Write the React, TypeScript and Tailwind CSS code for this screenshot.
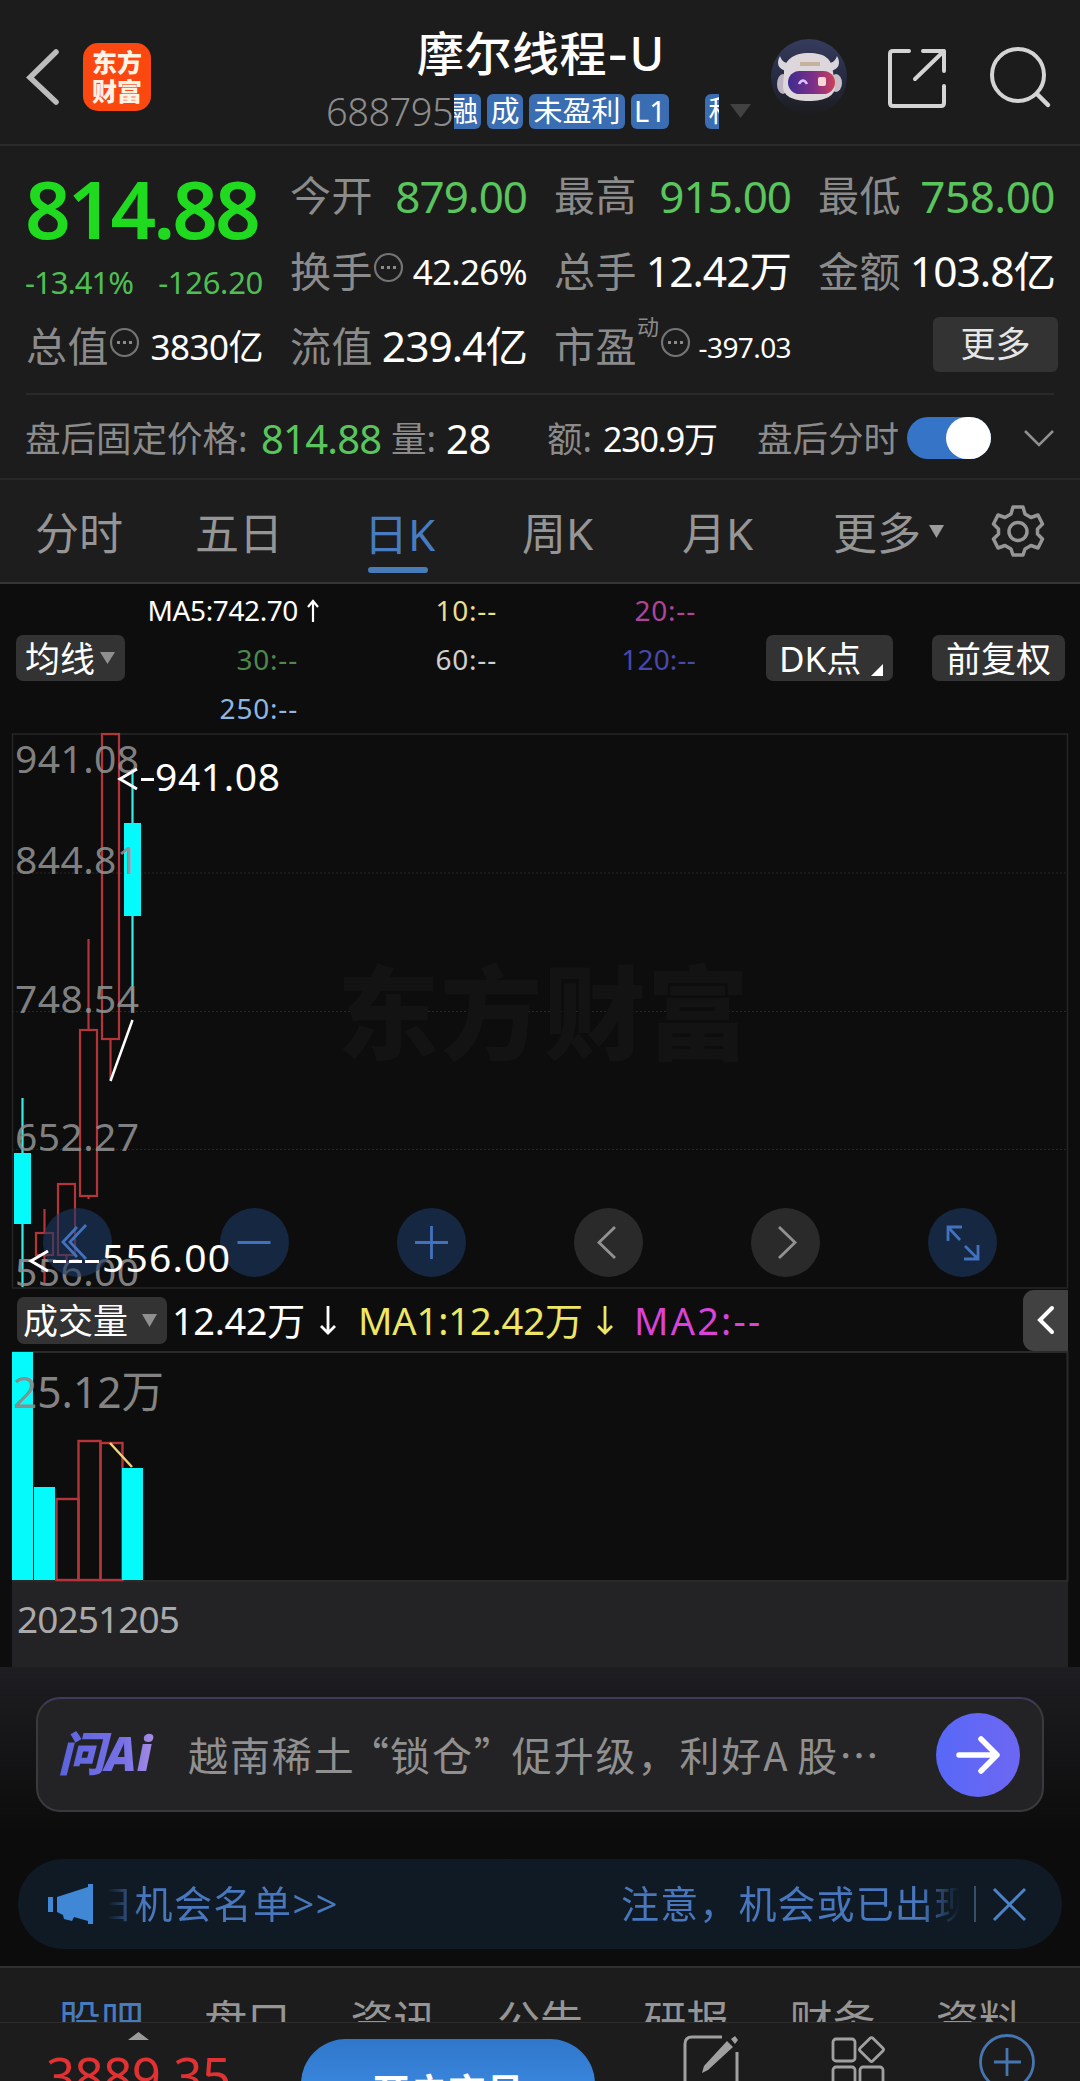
import type { ReactNode } from "react";
import { clsx } from "clsx";

const newsTabs = ["股吧", "盘口", "资讯", "公告", "研报", "财务", "资料"];

const axisLabels = [
  { text: "941.08", y: 40 },
  { text: "844.81", y: 141 },
  { text: "748.54", y: 280 },
  { text: "652.27", y: 418 },
  { text: "556.00", y: 553 },
];

// x é relativo à borda esquerda do gráfico (12px), y ao topo do painel
const candles = [
  { x: 2, w: 17, top: 420, bottom: 491, high: 365, low: 554, up: false },
  { x: 24, w: 17, top: 500, bottom: 522, high: 476, low: 550, up: true },
  { x: 46, w: 17, top: 451, bottom: 522, high: 451, low: 530, up: true },
  { x: 68, w: 17, top: 297, bottom: 463, high: 206, low: 466, up: true },
  { x: 90, w: 17, top: 1, bottom: 306, high: 1, low: 347, up: true },
  { x: 112, w: 17, top: 90, bottom: 183, high: 36, low: 278, up: false },
];

const volumes = [
  { x: 0, top: 0, up: false },
  { x: 22, top: 135, up: false },
  { x: 44, top: 147, up: true },
  { x: 66, top: 89, up: true },
  { x: 88, top: 91, up: true },
  { x: 110, top: 116, up: false },
];

export default function App() {
  return (
    <div className="flex h-[2081px] w-[1080px] flex-col overflow-hidden bg-[#0d0d0d] font-['Noto_Sans','Noto_Sans_CJK_SC',sans-serif] leading-none text-white">
      <Header />
      <Quote />
      <AfterHours />
      <PeriodTabs />
      <MovingAverages />
      <PriceChart />
      <VolumeChart />
      <AskAi />
      <Notice />
      <NewsTabs />
      <BottomBar />
    </div>
  );
}

/* HEADER */

function Header() {
  return (
    <header className="flex h-[146px] shrink-0 border-b-2 border-[#2b2b2b] bg-[#1c1c1c]">
      <svg className="ml-[24px] mt-[46px] h-[62px] w-[38px] shrink-0" viewBox="0 0 38 62" fill="none">
        <path d="M32 6 6 31.5 32 56" stroke="#bcbcbc" strokeWidth="5.5" strokeLinecap="round" />
      </svg>
      <div className="ml-[21px] mt-[43px] flex h-[68px] w-[68px] shrink-0 flex-col items-center justify-center gap-[3px] rounded-[15px] bg-[#fb4710] text-[25px] font-black text-[#fff3e6]">
        <span className="h-[26px]">东方</span>
        <span className="h-[26px]">财富</span>
      </div>

      <div className="ml-[175px] flex w-[433px] shrink-0 flex-col">
        <h1 className="ml-[91px] mt-[28px] flex whitespace-nowrap text-[47px] font-medium leading-[50px] tracking-[0.5px]">
          摩尔线程
          <span className="ml-[1px] origin-left scale-x-130">-</span>
          <span className="ml-[6px]">U</span>
        </h1>
        <div className="mt-[14px] flex h-[38px] items-center">
          <span className="w-[128px] shrink-0 text-[38px] font-light tracking-[-0.5px] text-[#8c8c8c]">
            688795
          </span>
          <div className="flex h-[35px] w-[265px] shrink-0 gap-[6px] overflow-hidden">
            <Tag className="-ml-[8px] w-[35px]">融</Tag>
            <Tag className="w-[36px]">成</Tag>
            <Tag className="w-[96px]">未盈利</Tag>
            <Tag className="w-[38px]">L1</Tag>
            <Tag className="ml-[30px] w-[36px]">科</Tag>
          </div>
          <svg className="ml-[11px] h-[14px] w-[21px]" viewBox="0 0 21 14">
            <path d="M0 0h21L10.500 14z" fill="#424242" />
          </svg>
        </div>
      </div>

      <RobotIcon />
      <svg className="ml-[36px] mt-[46px] h-[62px] w-[64px] shrink-0" viewBox="0 0 64 62" fill="none">
        <g stroke="#d4d4d4" strokeWidth="4" strokeLinecap="round" strokeLinejoin="round">
          <path d="M24 5H8q-3 0-3 3v49q0 3 3 3h48q3 0 3-3V40M38 5h21v20M59 5 30 33" />
        </g>
      </svg>
      <svg className="ml-[39px] mt-[44px] h-[66px] w-[64px] shrink-0" viewBox="0 0 64 66" fill="none">
        <circle cx="30" cy="31" r="26" stroke="#d4d4d4" strokeWidth="4" />
        <path d="m49 50 11 11" stroke="#d4d4d4" strokeWidth="4.500" strokeLinecap="round" />
      </svg>
    </header>
  );
}

function Tag({ className, children }: { className?: string; children: ReactNode }) {
  return (
    <span
      className={clsx(
        "flex h-[35px] shrink-0 items-center justify-center whitespace-nowrap rounded-[6px] bg-[#3a6db2] pb-[2px] text-[29px]",
        className
      )}
    >
      {children}
    </span>
  );
}

function RobotIcon() {
  return (
    <svg className="ml-[12px] mt-[38px] h-[78px] w-[78px] shrink-0" viewBox="0 0 78 78">
      <defs>
        <linearGradient id="orb" x1="0" y1="0" x2="0" y2="1">
          <stop offset="0" stopColor="#363c5e" />
          <stop offset="0.5" stopColor="#272b42" />
          <stop offset="1" stopColor="#1c1c1e" />
        </linearGradient>
        <linearGradient id="visor">
          <stop offset="0" stopColor="#3d2c90" />
          <stop offset="0.55" stopColor="#7e2f88" />
          <stop offset="1" stopColor="#cc4058" />
        </linearGradient>
      </defs>
      <circle cx="38" cy="39" r="38" fill="url(#orb)" />
      <path
        d="M9 18C5 25 7 31 15 33L21 25C15 26 11 24 9 18ZM66 18C70 25 68 31 60 33L54 25C60 26 64 24 66 18Z"
        fill="#d8d5dc"
      />
      <ellipse cx="12" cy="46" rx="6" ry="10" fill="#bcb5c1" />
      <ellipse cx="65" cy="45" rx="6" ry="9" fill="#c7bfc7" />
      <path
        d="M13 35C13 22 22 15 38 15S61 21 62 34L64 47C65 58 54 63 38 63S11 58 12 47Z"
        fill="#ddd6da"
      />
      <path d="M29 24h20v4H29z" fill="#c3b39b" />
      <rect x="17" y="33" width="47" height="23" rx="11.500" fill="url(#visor)" />
      <path d="M28 46q4-7 8 0" fill="none" stroke="#d6c5ff" strokeWidth="2.500" />
      <rect x="47" y="39" width="8" height="9" rx="2" fill="#ffd5d6" />
    </svg>
  );
}

/* COTAÇÃO */

function Quote() {
  return (
    <section className="flex h-[251px] shrink-0 flex-col bg-[#1c1c1c] px-[26px]">
      <div className="grid grid-cols-[237px_237px_237px_237px] gap-x-[27px]">
        <div className="row-span-2 flex h-[164px] flex-col">
          <span className="-ml-[1px] mt-[20px] text-[80px] font-semibold leading-[84px] tracking-[-3px] text-[#20da20]">
            814.88
          </span>
          <div className="mt-[12px] flex justify-between text-[31px] leading-[40px] text-[#4fbf53]">
            <span className="-ml-[1px] tracking-[-1px]">-13.41%</span>
            <span className="tracking-[-0.300px]">-126.20</span>
          </div>
        </div>
        <Stat label="今开" value="879.00" className="mt-[13px] text-[44px] tracking-[-1px] text-[#59c55c]" />
        <Stat label="最高" value="915.00" className="mt-[13px] text-[44px] tracking-[-1px] text-[#59c55c]" />
        <Stat label="最低" value="758.00" className="mt-[13px] text-[44px] tracking-[-0.500px] text-[#59c55c]" />
        <Stat label="换手" info value="42.26%" className="text-[35px] tracking-[-0.700px]" />
        <Stat label="总手" value="12.42万" className="text-[42.5px] tracking-[-1px]" />
        <Stat label="金额" value="103.8亿" className="text-[42.5px] tracking-[-1px]" />
        <Stat label="总值" info value="3830亿" className="text-[35px] tracking-[-0.500px]" />
        <Stat label="流值" value="239.4亿" className="text-[42.5px] tracking-[-1px]" />
        <Stat label="市盈" sup="动" info value="-397.03" className="text-[28px] tracking-[-0.600px]" />
        <div className="flex h-[75px] items-center justify-end">
          <button className="-mr-[3px] mb-[6px] h-[55px] w-[125px] rounded-[6px] bg-[#333333] pb-[2px] text-[35px] text-[#e6e6e6]">
            更多
          </button>
        </div>
      </div>
      <div className="mb-[2px] mt-auto h-[2px] w-full bg-[#292929]" />
    </section>
  );
}

function Stat({
  label,
  value,
  sup,
  info,
  className,
}: {
  label: string;
  value: string;
  sup?: string;
  info?: boolean;
  className: string;
}) {
  return (
    <div className={clsx("flex h-[75px] items-center whitespace-nowrap pb-[2px]", className)}>
      <span className="text-[41px] tracking-[0.5px] text-[#8b8b8b]">{label}</span>
      {sup && <span className="mb-[42px] mr-[2px] text-[22px] text-[#8b8b8b]">{sup}</span>}
      {info && (
        <svg className="mb-[8px] h-[31px] w-[31px] shrink-0" viewBox="0 0 31 31">
          <circle cx="15.500" cy="15.500" r="13.500" fill="none" stroke="#747474" strokeWidth="2.200" />
          <path d="M8 14h3v3H8zM14 14h3v3h-3zM20 14h3v3h-3z" fill="#8b8b8b" />
        </svg>
      )}
      <span className="ml-auto">{value}</span>
    </div>
  );
}

function AfterHours() {
  return (
    <section className="flex h-[83px] shrink-0 items-center whitespace-nowrap border-b-2 border-[#282828] bg-[#1c1c1c] pl-[25px] pt-[2px] text-[35.5px] text-[#8b8b8b]">
      <span className="w-[236px]">盘后固定价格:</span>
      <span className="w-[130px] text-[40px] tracking-[-0.8px] text-[#59c55c]">814.88</span>
      <span className="w-[55px]">量:</span>
      <span className="w-[101px] text-[40px] tracking-[-0.5px] text-white">28</span>
      <span className="w-[56px]">额:</span>
      <span className="w-[154px] text-[34px] tracking-[-1.200px] text-white">230.9万</span>
      <span className="w-[150px]">盘后分时</span>
      <span className="mb-[2px] flex h-[42px] w-[84px] justify-end rounded-full bg-[#3574c6]">
        <span className="h-[42px] w-[45px] rounded-full bg-white" />
      </span>
      <svg className="mb-[2px] ml-[32px] h-[20px] w-[32px]" viewBox="0 0 32 20" fill="none">
        <path d="m2 3 14 14L30 3" stroke="#909090" strokeWidth="2.500" />
      </svg>
    </section>
  );
}

/* PERÍODOS */

function PeriodTabs() {
  return (
    <nav className="flex h-[104px] shrink-0 items-center whitespace-nowrap border-b-2 border-[#353535] bg-[#1d1d1e] pl-[35px] text-[44px] text-[#959595]">
      <span className="w-[160px] pt-[4px]">分时</span>
      <span className="w-[169px] pt-[4px]">五日</span>
      <span className="flex w-[158px] flex-col text-[#477cc1]">
        <span className="mt-[15px] h-[63px] pt-[8px]">日K</span>
        <span className="ml-[4px] h-[6px] w-[60px] rounded-full bg-[#477cb8]" />
      </span>
      <span className="w-[160px] pt-[4px]">周K</span>
      <span className="w-[151px] pt-[4px]">月K</span>
      <span className="w-[96px] pt-[4px]">更多</span>
      <svg className="h-[13px] w-[15px]" viewBox="0 0 15 13">
        <path d="M0 0h15L7.500 13z" fill="#9c9c9c" />
      </svg>
      <svg className="ml-[47px] h-[54px] w-[54px]" viewBox="0 0 54 54" fill="none">
        <g stroke="#969696" strokeWidth="3.500" strokeLinejoin="round">
          <path d="M22 3h10l2 7 6 3.500 7-2.500 4.500 9-5 5v5l5 5-4.500 9-7-2.500L34 45l-2 6H22l-2-6-6-3.500L7 44l-4.500-9 5-5v-5l-5-5L7 11l7 2.500L20 10z" />
          <circle cx="27" cy="27.500" r="9" />
        </g>
      </svg>
    </nav>
  );
}

function MovingAverages() {
  return (
    <section className="flex h-[149px] shrink-0">
      <Chip className="ml-[16px] mt-[51px] h-[46px] w-[109px] pl-[9px]">
        <span>均线</span>
        <svg className="ml-[5px] h-[12px] w-[15px]" viewBox="0 0 15 12">
          <path d="M0 0h15L7.500 12z" fill="#8f8f8f" />
        </svg>
      </Chip>
      <div className="mt-[2px] grid h-[146px] w-[572px] shrink-0 grid-cols-[173px_199px_199px] grid-rows-3 items-center whitespace-nowrap text-right text-[28px] tracking-[0.8px]">
        <span className="relative tracking-[-0.400px]">
          MA5:742.70
          <svg className="absolute left-[181px] top-[3px] h-[23px] w-[14px]" viewBox="0 0 14 23" fill="none">
            <path d="M7 23V3M2 8l5-6 5 6" stroke="#fff" strokeWidth="2.200" />
          </svg>
        </span>
        <span className="text-[#e9df8d]">10:--</span>
        <span className="text-[#b04497]">20:--</span>
        <span className="text-[#4d884e]">30:--</span>
        <span className="text-[#cfcfcf]">60:--</span>
        <span className="tracking-[0.200px] text-[#4848ac]">120:--</span>
        <span className="text-[#8db7e3]">250:--</span>
      </div>
      <Chip className="ml-[69px] mt-[51px] h-[46px] w-[127px] pl-[13px]">
        <span>DK点</span>
        <svg className="ml-[10px] mt-[24px] h-[12px] w-[12px]" viewBox="0 0 12 12">
          <path d="M12 0v12H0z" fill="#fff" />
        </svg>
      </Chip>
      <Chip className="ml-[39px] mt-[51px] h-[46px] w-[133px] justify-center">前复权</Chip>
    </section>
  );
}

function Chip({ className, children }: { className?: string; children: ReactNode }) {
  return (
    <div
      className={clsx(
        "flex shrink-0 items-center whitespace-nowrap rounded-[7px] bg-[#333333] text-[35px]",
        className
      )}
    >
      {children}
    </div>
  );
}

/* GRÁFICO DE PREÇOS */

function PriceChart() {
  return (
    <section className="relative ml-[12px] h-[555px] w-[1056px] shrink-0">
      <svg
        className="h-[555px] w-[1056px] overflow-visible"
        viewBox="0 0 1056 555"
        fontFamily="'Noto Sans', 'Noto Sans CJK SC', sans-serif"
      >
        <rect x="0.500" y="1" width="1055" height="554" fill="none" stroke="#262626" strokeWidth="1.500" />
        {[140, 278.5, 416.5].map((y) => (
          <path key={y} d={`M0 ${y}H1055`} stroke="#272727" strokeDasharray="2 2" />
        ))}
        <text
          x="325"
          y="319"
          fontSize="102"
          fontWeight="900"
          fill="#131314"
          textLength="412"
        >
          东方财富
        </text>
        {candles.map((c) => (
          <g key={c.x} stroke={c.up ? "#b4343a" : "#35ede7"} strokeWidth="2.200">
            <path d={`M${c.x + c.w / 2} ${c.high}V${c.top}M${c.x + c.w / 2} ${c.bottom}V${c.low}`} />
            <rect
              x={c.x}
              y={c.top}
              width={c.w}
              height={c.bottom - c.top}
              fill={c.up ? "none" : "#05fbfb"}
              strokeWidth={c.up ? 2.2 : 0}
            />
          </g>
        ))}
        <path d="M98.500 348 120.500 287" stroke="#fff" strokeWidth="2.500" />
        {axisLabels.map((label) => (
          <text
            key={label.text}
            x="3"
            y={label.y}
            fontSize="39"
            fill="#909090"
            fillOpacity="0.9"
            textLength="124"
          >
            {label.text}
          </text>
        ))}
      </svg>

      <div className="absolute left-[31px] top-[475px] flex gap-[108px]">
        <RoundButton>
          <path d="M34 19 20 34l14 15M43 17 27 34l16 17" />
        </RoundButton>
        <RoundButton>
          <path d="M17.500 34.500h33" />
        </RoundButton>
        <RoundButton>
          <path d="M18 34.500h33M34.500 18v33" />
        </RoundButton>
        <RoundButton muted>
          <path d="M41 19 25 34.500 41 50" />
        </RoundButton>
        <RoundButton muted>
          <path d="M28 19l16 15.500L28 50" />
        </RoundButton>
        <RoundButton>
          <path d="M20 33V19h14M20 19l12 13M50 37v14H36M50 51 37 38" />
        </RoundButton>
      </div>

      <svg
        className="absolute left-0 top-0 h-[555px] w-[400px]"
        viewBox="0 0 400 555"
        fill="#fff"
        fontFamily="'Noto Sans', sans-serif"
        fontSize="39"
      >
        <path d="M125 36 108 46l17 10M36 518l-17 10 17 10" fill="none" stroke="#fff" strokeWidth="3" />
        <path d="M129 46.500h13M41 528.500h13M57 528.500h13M73 528.500h14" stroke="#fff" strokeWidth="3" />
        <text x="143" y="58" textLength="125">
          941.08
        </text>
        <text x="90" y="539" textLength="128">
          556.00
        </text>
      </svg>
    </section>
  );
}

function RoundButton({ muted, children }: { muted?: boolean; children: ReactNode }) {
  return (
    <span
      className={clsx(
        "flex h-[69px] w-[69px] rounded-full",
        muted ? "bg-[#2a2a2a]" : "bg-[#1d3964]/60"
      )}
    >
      <svg
        className={muted ? "text-[#929292]" : "text-[#4272bd]"}
        viewBox="0 0 69 69"
        fill="none"
        stroke="currentColor"
        strokeWidth="2.800"
      >
        {children}
      </svg>
    </span>
  );
}

/* VOLUME */

function VolumeChart() {
  return (
    <section className="flex h-[379px] shrink-0 flex-col pl-[12px]">
      <div className="flex h-[64px] w-[1056px] items-center whitespace-nowrap text-[38px] tracking-[-0.4px]">
        <Chip className="ml-[5px] h-[47px] w-[150px] pl-[6px] tracking-normal">
          <span>成交量</span>
          <svg className="ml-[14px] h-[13px] w-[15px]" viewBox="0 0 15 13">
            <path d="M0 0h15L7.500 13z" fill="#8f8f8f" />
          </svg>
        </Chip>
        <span className="ml-[5px] w-[147px]">12.42万</span>
        <DownArrow className="text-white" />
        <span className="ml-[21px] w-[238px] tracking-[-0.100px] text-[#eee766]">MA1:12.42万</span>
        <DownArrow className="text-[#eee766]" />
        <span className="ml-[20px] tracking-[2.200px] text-[#da43d8]">MA2:--</span>
        <span className="ml-auto flex h-[61px] w-[45px] items-center justify-center rounded-l-[11px] bg-[#414141]">
          <svg className="h-[30px] w-[20px]" viewBox="0 0 20 30" fill="none">
            <path d="M16 3 4 15l12 12" stroke="#fff" strokeWidth="4" strokeLinecap="round" />
          </svg>
        </span>
      </div>

      <svg className="h-[230px] w-[1056px] shrink-0 overflow-visible" viewBox="0 0 1056 230">
        <path d="M0 0H1055.500V229H0" fill="none" stroke="#2a2a2a" strokeWidth="2" />
        {volumes.map((v) => (
          <rect
            key={v.x}
            x={v.up ? v.x + 0.5 : v.x}
            y={v.top}
            width={v.up ? 22 : 21}
            height={228 - v.top}
            fill={v.up ? "none" : "#05fbfb"}
            stroke="#b4343a"
            strokeWidth={v.up ? 2.4 : 0}
          />
        ))}
        <path d="M98 91 120 115" stroke="#f3d277" strokeWidth="2.500" />
        <text
          x="1"
          y="56"
          fontSize="44"
          fill="#8b8b8b"
          fillOpacity="0.95"
          fontFamily="'Noto Sans', 'Noto Sans CJK SC', sans-serif"
          textLength="151"
          lengthAdjust="spacingAndGlyphs"
        >
          25.12万
        </text>
      </svg>

      <div className="flex h-[85px] w-[1056px] shrink-0 items-center bg-[#232325] pb-[12px] pl-[5px] text-[37px] tracking-[-0.9px] text-[#aaaaaa]">
        20251205
      </div>
    </section>
  );
}

function DownArrow({ className }: { className?: string }) {
  return (
    <svg className={clsx("h-[30px] w-[18px] shrink-0", className)} viewBox="0 0 18 30" fill="none">
      <path d="M9 1v27M2 21l7 7 7-7" stroke="currentColor" strokeWidth="2.800" />
    </svg>
  );
}

/* RODAPÉ */

function AskAi() {
  return (
    <section className="h-[192px] shrink-0 bg-linear-to-b from-[#1e1e22] to-[#0c0c0c] to-85% px-[36px] pt-[30px]">
      <div className="flex h-[115px] w-[1008px] items-center rounded-[24px] border-2 border-[#3a3a3c] border-t-[#3e3a58] bg-[#232326]">
        <span className="ml-[20px] w-[130px] shrink-0 bg-linear-to-r from-[#5a64dc] via-[#7770e6] via-50% to-[#a98ce4] to-75% bg-clip-text pb-[3px] text-[47px] leading-[56px] font-black text-transparent italic">
          问Ai
        </span>
        <div className="flex w-[697px] shrink-0 whitespace-nowrap pb-[2px] font-['Noto_Sans_CJK_SC',sans-serif] text-[40px] tracking-[1.900px] text-[#909090]">
          <span className="w-[161px]">越南稀土</span>
          <span className="w-[41px]">“</span>
          <span>锁仓</span>
          <span className="w-[38px]">”</span>
          <span>促升级，利好</span>
          <span className="w-[34px]">A</span>
          <span>股…</span>
        </div>
        <span className="ml-[51px] flex h-[84px] w-[84px] items-center justify-center rounded-full bg-linear-to-r from-[#5768f7] to-[#6d67f2]">
          <svg className="h-[40px] w-[44px]" viewBox="0 0 44 40" fill="none">
            <path d="M3 20h37M25 4l16 16-16 16" stroke="#fff" strokeWidth="5.500" strokeLinecap="round" strokeLinejoin="round" />
          </svg>
        </span>
      </div>
    </section>
  );
}

function Notice() {
  return (
    <section className="h-[107px] shrink-0 bg-[#0c0c0c] px-[18px]">
      <div className="flex h-[90px] items-center rounded-full bg-[#101a25] text-[38px] whitespace-nowrap text-[#4877bd]">
        <svg className="ml-[29px] h-[42px] w-[48px] shrink-0" viewBox="0 0 48 42">
          <path d="M1 14h5v15H1zM10 14 41 4V1h5v40h-5v-3L27 34l-2 4-8-2-1-4-6-3z" fill="#4088d5" />
        </svg>
        <div className="ml-[13px] flex h-[60px] w-[852px] items-center justify-between overflow-hidden pb-[2px] tracking-[1.100px] [mask-image:linear-gradient(to_right,transparent,black_34px,black_812px,transparent)]">
          <span className="-ml-[13px] tracking-[1.500px]">日机会名单&gt;&gt;</span>
          <span className="-mr-[13px]">注意，机会或已出现</span>
        </div>
        <span className="ml-[14px] h-[36px] w-[2px] bg-[#35506d]" />
        <svg className="ml-[16px] h-[35px] w-[35px]" viewBox="0 0 35 35">
          <path d="m2 2 31 31M33 2 2 33" stroke="#4b83c9" strokeWidth="3" />
        </svg>
      </div>
    </section>
  );
}

function NewsTabs() {
  return (
    <nav className="h-[56px] shrink-0 overflow-hidden border-t-2 border-[#303030] bg-[#1c1c1c]">
      <div className="flex pl-[58px] pt-[31px] text-[43px] whitespace-nowrap text-[#959595]">
        {newsTabs.map((tab, index) => (
          <span key={tab} className={clsx("w-[146.3px] shrink-0", index === 0 && "text-[#477bbb]")}>
            {tab}
          </span>
        ))}
      </div>
    </nav>
  );
}

function BottomBar() {
  return (
    <footer className="flex h-[59px] shrink-0 overflow-hidden border-t border-[#2d2d2d] bg-[#1c1c1c]">
      <div className="ml-[46px] flex w-[255px] shrink-0 flex-col">
        <svg className="ml-[82px] mt-[9px] h-[8px] w-[21px] shrink-0" viewBox="0 0 21 8">
          <path d="M0 8 10.500 0 21 8z" fill="#9b9b9b" />
        </svg>
        <span className="mt-[5px] text-[51px] leading-[60px] tracking-[-0.6px] text-[#e13132]">3889.35</span>
      </div>
      <div className="mt-[16px] flex h-[90px] w-[294px] shrink-0 justify-center rounded-full bg-linear-to-b from-[#2f77cb] to-[#4394ec] pt-[33px] text-[38px] font-bold">
        开户交易
      </div>
      <svg className="ml-[86px] mt-[10px] h-[60px] w-[60px] shrink-0" viewBox="0 0 60 60" fill="none">
        <path d="M41 4H11q-7 0-7 7v49M56 19v41" stroke="#a0a0a0" strokeWidth="3" />
        <path d="m50 6 4-3 3 4-3 4zM46 8l6 6-25 23-6 3 2-7z" fill="#a0a0a0" />
      </svg>
      <svg className="ml-[89px] mt-[10px] h-[60px] w-[56px] shrink-0" viewBox="0 0 56 60" fill="none">
        <g stroke="#a0a0a0" strokeWidth="2.800">
          <rect x="3" y="6" width="22" height="22" rx="3" />
          <rect x="3" y="34" width="22" height="24" rx="3" />
          <rect x="30" y="34" width="23" height="24" rx="3" />
          <rect x="32.500" y="7.500" width="18" height="18" rx="2" transform="rotate(45 41.500 16.500)" />
        </g>
      </svg>
      <svg className="ml-[91px] mt-[9px] h-[60px] w-[60px] shrink-0" viewBox="0 0 60 60" fill="none">
        <circle cx="30" cy="30" r="26.500" stroke="#4676b2" strokeWidth="2.800" />
        <path d="M17 30h27M30 16v28" stroke="#4676b2" strokeWidth="2.800" />
      </svg>
    </footer>
  );
}
